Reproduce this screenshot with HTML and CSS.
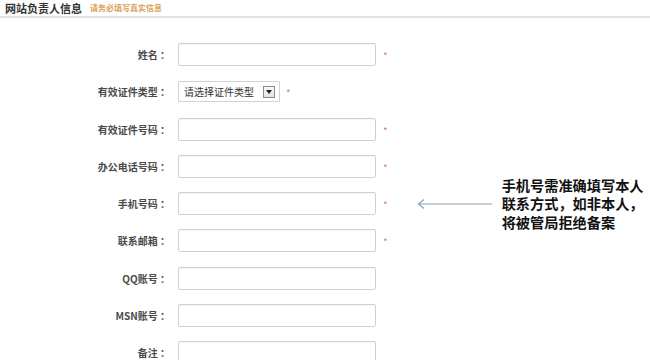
FILE: index.html
```html
<!DOCTYPE html>
<html lang="zh">
<head>
<meta charset="utf-8">
<link rel="stylesheet" href="styles.css">
</head>
<body>
<div class="header">
  <span class="title">网站负责人信息</span>
  <span class="subtitle">请务必填写真实信息</span>
</div>
<div class="form">
  <div class="row"><label class="label">姓名 ：</label><div class="input"></div><span class="req">*</span></div>
  <div class="row"><label class="label">有效证件类型 ：</label><div class="select"><span class="select-text">请选择证件类型</span><span class="select-btn"><svg width="6" height="4" viewBox="0 0 6 4"><path d="M0 0H6L3 4Z" fill="#222"/></svg></span></div><span class="req req-sel">*</span></div>
  <div class="row"><label class="label">有效证件号码 ：</label><div class="input"></div><span class="req">*</span></div>
  <div class="row"><label class="label">办公电话号码 ：</label><div class="input"></div><span class="req">*</span></div>
  <div class="row"><label class="label">手机号码 ：</label><div class="input"></div><span class="req">*</span>
    <div class="note">
      <svg class="arrow" width="76" height="12" viewBox="0 0 76 12"><path d="M1 6H75M7 1.5L1.5 6L7 10.5" fill="none" stroke="#8ea2b6" stroke-width="1.2"/></svg>
      <div class="note-text">
        <div class="note-line">手机号需准确填写本人</div>
        <div class="note-line">联系方式，如非本人，</div>
        <div class="note-line">将被管局拒绝备案</div>
      </div>
    </div>
  </div>
  <div class="row"><label class="label">联系邮箱 ：</label><div class="input"></div><span class="req">*</span></div>
  <div class="row"><label class="label">QQ账号 ：</label><div class="input"></div></div>
  <div class="row"><label class="label">MSN账号 ：</label><div class="input"></div></div>
  <div class="row"><label class="label">备注 ：</label><div class="input"></div></div>
</div>
</body>
</html>
```
FILE: styles.css
```css
* { box-sizing: border-box; }
body {
  margin: 0;
  background: #fff;
  font-family: "Noto Sans CJK SC", "Liberation Sans", sans-serif;
  overflow: hidden;
}
.header {
  height: 18px;
  padding-left: 5px;
  border-bottom: 2px solid #e2e2e2;
  display: flex;
  align-items: center;
  gap: 8px;
}
.title {
  font-size: 11px;
  font-weight: 700;
  color: #333;
  line-height: 14px;
}
.subtitle {
  font-size: 8px;
  font-weight: 700;
  color: #d9a25a;
  line-height: 10px;
}
.form {
  padding-top: 25px;
  display: flex;
  flex-direction: column;
  gap: 14.3px;
}
.row {
  height: 23px;
  display: flex;
  align-items: center;
}
.label {
  width: 170px;
  text-align: right;
  font-size: 10px;
  font-weight: 700;
  color: #4a4a4a;
  margin-right: 8px;
  white-space: nowrap;
}
.input {
  width: 198px;
  height: 23px;
  border: 1px solid #d0d0d0;
  border-radius: 2px;
  box-shadow: inset 0 1px 1px rgba(0,0,0,0.04);
  flex: none;
}
.select {
  width: 102px;
  height: 21px;
  border: 1px solid #d3d3d3;
  border-radius: 1px;
  display: flex;
  align-items: center;
  padding-left: 5px;
  padding-right: 4px;
  justify-content: space-between;
  flex: none;
}
.select-text {
  font-size: 10px;
  color: #333;
}
.select-btn {
  width: 12px;
  height: 12px;
  border: 1px solid #8a8a8a;
  background: linear-gradient(#fafafa, #e4e4e4);
  display: flex;
  align-items: center;
  justify-content: center;
}
.req {
  color: #e08a4a;
  font-size: 10px;
  margin-left: 7px;
  line-height: 10px;
  padding-top: 3px;
}
.req-sel { margin-left: 6px; }
.note {
  display: flex;
  align-items: center;
  margin-left: 29px;
}
.arrow { flex: none; }
.note-text {
  margin-left: 9px;
  display: flex;
  flex-direction: column;
}
.note-line {
  font-size: 14.2px;
  font-weight: 700;
  line-height: 18.5px;
  height: 18.5px;
  color: #111;
  white-space: nowrap;
}
```
